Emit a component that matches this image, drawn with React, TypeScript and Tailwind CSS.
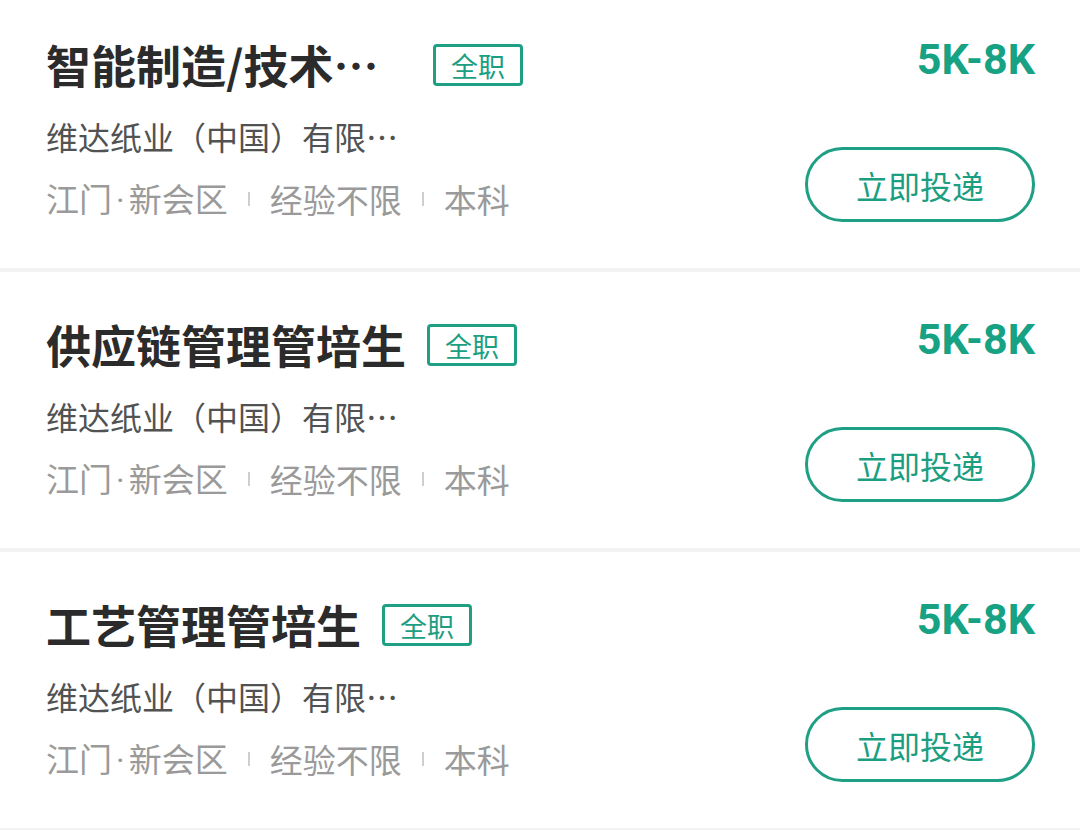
import React from 'react';

type Job = {
  title: string;
  company: string;
  city: string;
  district: string;
  experience: string;
  degree: string;
  salary: string;
  type: string;
};

const jobs: Job[] = [
  {
    title: '智能制造/技术管培生',
    company: '维达纸业（中国）有限公司',
    city: '江门',
    district: '新会区',
    experience: '经验不限',
    degree: '本科',
    salary: '5K-8K',
    type: '全职',
  },
  {
    title: '供应链管理管培生',
    company: '维达纸业（中国）有限公司',
    city: '江门',
    district: '新会区',
    experience: '经验不限',
    degree: '本科',
    salary: '5K-8K',
    type: '全职',
  },
  {
    title: '工艺管理管培生',
    company: '维达纸业（中国）有限公司',
    city: '江门',
    district: '新会区',
    experience: '经验不限',
    degree: '本科',
    salary: '5K-8K',
    type: '全职',
  },
];

function Divider() {
  return <span className="mx-[20px] h-[14px] w-[2px] shrink-0 bg-[#cfcfcf]" />;
}

function JobCard({ job }: { job: Job }) {
  return (
    <div className="flex h-[276px] justify-between bg-white pl-[46px] pr-[45px] pt-[44px]">
      <div className="flex min-w-0 flex-col">
        <div className="flex h-[58px] items-center">
          <span className="max-w-[366px] truncate text-[45px] font-bold leading-[58px] text-[#2b2b2b]">
            {job.title}
          </span>
          <span className="ml-[21px] flex h-[42px] shrink-0 items-center rounded-[4px] border-[3px] border-[#1f9f84] px-[15px] text-[27px] leading-none text-[#1c9e82]">
            {job.type}
          </span>
        </div>
        <div className="mt-[20px] max-w-[366px] truncate text-[32px] leading-[44px] text-[#525252]">
          {job.company}
        </div>
        <div className="mt-[19px] flex h-[44px] items-center text-[33px] leading-[44px] text-[#9a9a9a]">
          <span>
            {job.city}
            <span className="px-[4px] font-['Roboto',sans-serif]">·</span>
            {job.district}
          </span>
          <Divider />
          <span>{job.experience}</span>
          <Divider />
          <span>{job.degree}</span>
        </div>
      </div>

      <div className="flex shrink-0 flex-col items-end">
        <span className="font-['Roboto','Noto_Sans_CJK_SC',sans-serif] text-[43px] font-bold leading-[46px] text-[#17a283]">
          {job.salary}
        </span>
        <button
          type="button"
          className="mt-[65px] flex h-[75px] w-[230px] items-center justify-center rounded-full border-[3px] border-[#1f9f84] text-[32px] leading-none text-[#1c9e82]"
        >
          立即投递
        </button>
      </div>
    </div>
  );
}

export default function App() {
  return (
    <div className="h-[830px] w-[1080px] overflow-hidden bg-white font-['Noto_Sans_CJK_SC','Noto_Sans',sans-serif]">
      <div className="-mt-[8px] flex flex-col">
        {jobs.map((job) => (
          <div key={job.title}>
            <JobCard job={job} />
            <div className="h-[4px] bg-[#f2f2f2]" />
          </div>
        ))}
      </div>
    </div>
  );
}
